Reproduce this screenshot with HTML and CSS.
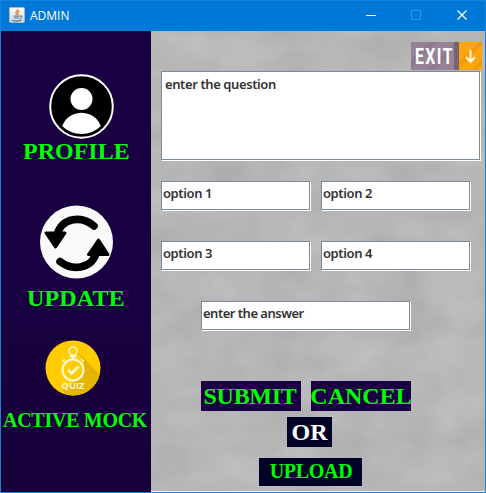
FILE: index.html
```html
<!DOCTYPE html>
<html lang="en">
<head>
<meta charset="utf-8">
<title>ADMIN</title>
<link rel="stylesheet" href="styles.css">
</head>
<body>
<div class="window">
  <header class="titlebar">
    <svg class="java" width="16" height="16" viewBox="0 0 16 16">
      <defs><linearGradient id="jg" x2="0" y2="1"><stop stop-color="#fff"/><stop offset="1" stop-color="#cfd2d6"/></linearGradient></defs>
      <rect x=".5" y=".5" width="15" height="15" rx="1" fill="url(#jg)" stroke="#aab6c2"/>
      <path d="M8.7 1.8C10 3.6 6 4.4 7 6.300 7.300 7 8 7.300 8 8M10.700 4C8.500 5 8.500 5.700 9 6.500 9.400 7.200 9 7.600 8.800 8" fill="none" stroke="#e8762c" stroke-width="1.200"/>
      <path d="M4.500 9.200H10.500M5 11H10M3 13.200C6 14.200 10 14.200 12.500 12.800M11 9C13.500 8.500 13 10.800 10.800 11.300" fill="none" stroke="#53809f" stroke-width="1.200"/>
    </svg>
    <span class="title">ADMIN</span>
    <svg class="controls" width="138" height="30" viewBox="0 0 138 30" fill="none">
      <path d="M18 14.500H28" stroke="#fff"/>
      <rect x="63.500" y="9.500" width="9" height="9" stroke="#3294e2"/>
      <path d="M109.500 9.500L118.500 18.500M118.500 9.500L109.500 18.500" stroke="#fff" stroke-width="1.200"/>
    </svg>
  </header>
  <div class="body">
    <nav class="sidebar">
      <svg class="icon-profile" width="66" height="66" viewBox="0 0 66 66">
        <defs><clipPath id="pc"><circle cx="32.500" cy="32.500" r="27.500"/></clipPath></defs>
        <circle cx="32.500" cy="32.500" r="31.300" fill="#000" stroke="#fff" stroke-width="2"/>
        <circle cx="32.500" cy="25" r="11" fill="#fff"/>
        <ellipse cx="32.500" cy="58.500" rx="20.500" ry="19.800" fill="#fff" clip-path="url(#pc)"/>
      </svg>
      <span class="label profile">PROFILE</span>
      <svg class="icon-update" width="74" height="74" viewBox="0 0 74 74">
        <defs><pattern id="st" width="4" height="4" patternUnits="userSpaceOnUse"><rect width="4" height="4" fill="#fcfcfc"/><path d="M0 4L4 0" stroke="#f0f0f0" stroke-width=".8"/></pattern></defs>
        <circle cx="37.500" cy="37" r="36.500" fill="url(#st)"/>
        <path d="M55 21C43 10.500 23 12 18 30M21 56.500C33 66 54 65 58 45" fill="none" stroke="#000" stroke-width="7.600" stroke-linecap="round"/>
        <path d="M7 28H26L16.500 42ZM49.500 49.500L59.500 35 69 49.500Z" fill="#000" stroke="#000" stroke-width="3" stroke-linejoin="round"/>
      </svg>
      <span class="label update">UPDATE</span>
      <svg class="icon-quiz" width="56" height="56" viewBox="0 0 56 56">
        <defs><clipPath id="qc"><circle cx="28" cy="28" r="27.500"/></clipPath></defs>
        <circle cx="28" cy="28" r="27.500" fill="#fc0"/>
        <path d="M31 10L60 40V60H25L17 50 36 38 39 22Z" fill="#e5b500" clip-path="url(#qc)"/>
        <g fill="none" stroke="#fff8d8">
          <circle cx="28" cy="30" r="10.500" stroke-width="2.200"/>
          <circle cx="28" cy="11" r="4" stroke-width="1.500"/>
          <path d="M28 15V19M24.500 16.200H31.500" stroke-width="2.600"/>
          <path d="M17 21.500L20 19M36 19L39 21.500" stroke-width="1.600"/>
          <path d="M23 29.500L26.500 33.500 33.500 26.500" stroke-width="2.600"/>
        </g>
        <text x="16.500" y="49" textLength="23" lengthAdjust="spacingAndGlyphs" class="quiz-text">QUIZ</text>
      </svg>
      <span class="label mock">ACTIVE MOCK</span>
    </nav>
    <main class="main">
      <svg class="texture" width="334" height="460">
        <filter id="haze" x="0" y="0" width="100%" height="100%"><feTurbulence type="fractalNoise" baseFrequency=".018 .026" numOctaves="3" seed="8"/><feColorMatrix values=".1 0 0 0 .665  .1 0 0 0 .665  .1 0 0 0 .665  0 0 0 0 1"/></filter>
        <rect width="334" height="460" filter="url(#haze)"/>
      </svg>
      <div class="content">
        <div class="exit">
          <svg width="71" height="28" viewBox="0 0 71 28">
            <rect width="71" height="28" fill="#968397"/>
            <path d="M0 18L18 0H26L0 26ZM16 28L44 0H52L24 28Z" fill="#8d7990"/>
            <rect x="43" width="5" height="28" fill="#746474"/>
            <rect x="48" width="23" height="28" fill="#ffa50c"/>
            <path d="M48 20L68 0H71V3L48 26ZM60 28L71 17V23L66 28Z" fill="#f39a0c"/>
            <text transform="translate(4 22) scale(.72 1)" class="exit-text">EXIT</text>
            <path d="M59.500 8V19.500M55 15L59.500 20 64 15" fill="none" stroke="#fff5dc" stroke-width="2"/>
          </svg>
        </div>
        <div class="field question">enter the question</div>
        <div class="options">
          <div class="field">option 1</div>
          <div class="field">option 2</div>
          <div class="field">option 3</div>
          <div class="field">option 4</div>
        </div>
        <div class="field answer">enter the answer</div>
        <div class="actions">
          <div class="btn submit">SUBMIT</div>
          <div class="btn">CANCEL</div>
        </div>
        <div class="btn or">OR</div>
        <div class="btn upload">UPLOAD</div>
      </div>
    </main>
  </div>
</div>
</body>
</html>
```

FILE: styles.css
```css
* { box-sizing: border-box; }
body { margin: 0; overflow: hidden; }
.window {
  width: 486px;
  height: 493px;
  border: 1px solid #1683d8;
  background: #fff;
  display: flex;
  flex-direction: column;
}
.titlebar {
  height: 30px;
  flex: none;
  background: #0078d7;
  display: flex;
  align-items: center;
  padding-left: 8px;
  color: #fff;
  font: 12px/30px "Open Sans", "Noto Sans", sans-serif;
}
.java { margin-top: -2px; }
.title { margin-left: 5px; height: 30px; }
.controls { margin-left: auto; margin-right: -1px; }
.body { display: flex; height: 461px; }
.sidebar {
  width: 150px;
  background: linear-gradient(#1a0042, #190040 60%, #170039);
  display: flex;
  flex-direction: column;
  align-items: flex-start;
}
.sidebar svg { flex: none; }
.label {
  font: bold 24px/28px "Liberation Serif", serif;
  color: #0f0;
  white-space: nowrap;
}
.icon-profile { margin: 43px 0 0 48px; }
.profile { margin: -3px 0 0 22px; }
.icon-update { margin: 40px 0 0 38px; }
.update { margin: 5px 0 0 26px; letter-spacing: .15px; }
.icon-quiz { margin: 28px 0 0 44px; }
.mock { font-size: 20px; margin: 10px 0 0 2px; letter-spacing: -.28px; }
.quiz-text { font: bold 9.500px "Open Sans", sans-serif; fill: #fff8d8; }
.main {
  position: relative;
  width: 334px;
  height: 460px;
  background: #b5b5b5;
}
.texture { position: absolute; inset: 0; color-interpolation-filters: sRGB; }
.content {
  position: relative;
  display: flex;
  flex-direction: column;
  align-items: flex-start;
  padding-left: 10px;
}
.exit { height: 28px; margin: 11px 0 1px 250px; }
.exit svg { display: block; }
.exit-text { font: bold 22px "Roboto", sans-serif; fill: #fff; letter-spacing: 2px; }
.field {
  width: 150px;
  height: 30px;
  background: #fff;
  border: 1px solid #7a8a99;
  border-right-color: #fff;
  border-bottom-color: #fff;
  box-shadow: inset -1px -1px #7a8a99;
  font: 600 13px/22px "Noto Sans", "Open Sans", sans-serif;
  letter-spacing: -.4px;
  color: #333;
  padding-left: 1px;
  white-space: nowrap;
}
.question { width: 320px; height: 90px; padding: 1px 0 0 3px; }
.options {
  display: grid;
  grid-template-columns: 150px 150px;
  gap: 30px 10px;
  margin-top: 20px;
}
.answer { width: 210px; margin: 30px 0 0 40px; letter-spacing: -.5px; }
.actions { display: flex; gap: 10px; margin: 50px 0 0 40px; }
.btn {
  width: 100px;
  height: 30px;
  background: #1a0042;
  color: #0f0;
  font: bold 24px/30px "Liberation Serif", serif;
  display: flex;
  justify-content: center;
  white-space: nowrap;
}
.submit { letter-spacing: -.3px; padding-right: 2px; }
.or { width: 45px; margin: 6px 0 0 126px; background: #000326; color: #fff; }
.upload {
  width: 103px;
  height: 28px;
  margin: 11px 0 0 98px;
  padding-left: 1px;
  background: #000326;
  font-size: 20px;
  line-height: 27px;
  letter-spacing: -.3px;
}
```
